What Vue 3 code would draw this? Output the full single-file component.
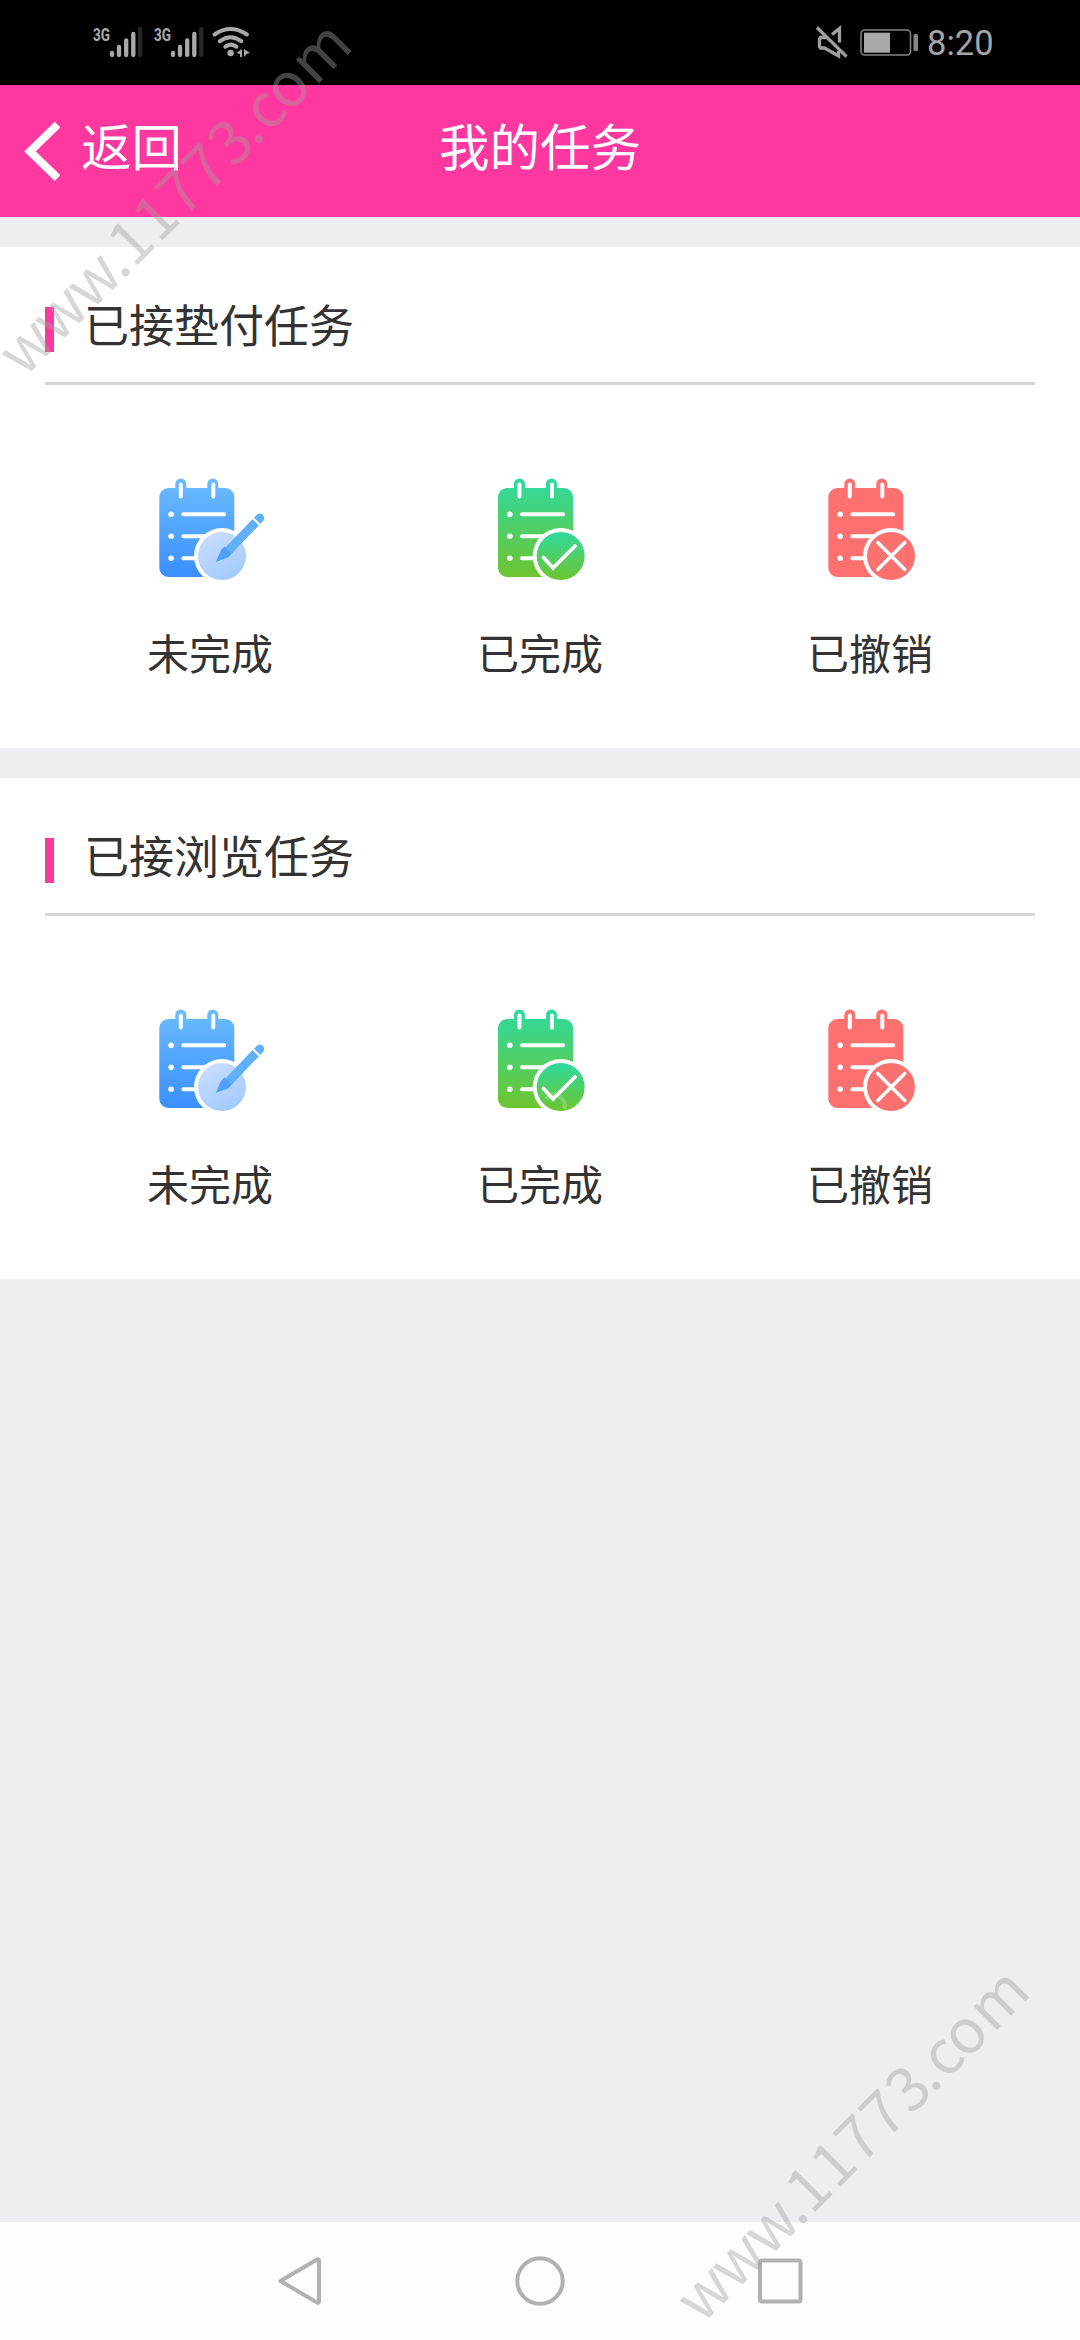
<script setup>
const sections = [
  { title: '已接垫付任务', id: 'advance' },
  { title: '已接浏览任务', id: 'browse' },
]
const tasks = [
  { kind: 'edit', label: '未完成', shift: 2.3 },
  { kind: 'done', label: '已完成', shift: 11 },
  { kind: 'cancel', label: '已撤销', shift: 11.3 },
]
const fills = { edit: 'url(#blue)', done: 'url(#green)', cancel: '#fd7070' }
const discFills = { edit: 'url(#pale)', done: 'url(#greenDisc)', cancel: '#fd7070' }

// Watermark letter advances along its diagonal baseline
const markX = '-0.5 46.7 93.9 138 154.8 190.1 224.8 260.1 295.8 326.5 345 373.3 411.5'
const marks = ['24.3 378.3', '702 2325']
</script>

<template>
  <div class="screen">
    <div class="status">
      <svg class="status-left" width="180" height="40" viewBox="0 0 180 40">
        <g v-for="x in [0, 61]" :key="x" :transform="`translate(${x} 0)`">
          <text class="net" x="3" y="20.5" textLength="17" lengthAdjust="spacingAndGlyphs">3G</text>
          <g stroke="#a9a9a9" stroke-width="4.3" stroke-linecap="round">
            <path d="M22 33v2M29 27v8M36.2 20.500v14.500M43.3 14v21" />
            <path d="M50.2 9v26" stroke="#262626" />
          </g>
        </g>
        <g fill="none" stroke="#a9a9a9" stroke-width="4" stroke-linecap="round">
          <path d="M124.500 14.500q16-11 32.500 0M129.800 21.200q10.700-8 21.500 0M135.300 26.700q5.500-4.200 11 0" />
        </g>
        <circle cx="140.600" cy="33" r="3.200" fill="#a9a9a9" />
        <path d="M146.500 33l5.500-4v8h-2v-3zM154 29l6 4-3.500 1-2.500 3z" fill="#a9a9a9" />
      </svg>
      <div class="status-right">
        <svg width="104" height="40" viewBox="0 0 104 40">
          <g fill="none" stroke="#a0a0a0" stroke-width="3.300">
            <path d="M18 14.500l7.500-6v14M12 17.500H6.500l-1 1.500v7.500l1 1.500h4l14 8V31" />
            <path d="M3 7.500L32.500 36.700" />
          </g>
          <rect x="47" y="10" width="49.500" height="25" rx="3.500" fill="none" stroke="#858585" stroke-width="1.500" />
          <rect x="50" y="12.700" width="26" height="20" fill="#a9a9a9" />
          <rect x="99.500" y="14" width="4.500" height="17" rx="1.500" fill="#858585" />
        </svg>
        <span class="clock">8:20</span>
      </div>
    </div>

    <header class="header">
      <div class="back">
        <svg width="36" height="60" viewBox="0 0 36 60">
          <path d="M33.500 3.500L6 30.500l27.500 26.500" fill="none" stroke="#fff" stroke-width="8" />
        </svg>
        <span>返回</span>
      </div>
      <h1>我的任务</h1>
    </header>

    <main class="content">
      <section v-for="section in sections" :key="section.id" class="panel">
        <h2 class="panel-title"><i></i><span>{{ section.title }}</span></h2>
        <div class="tasks">
          <div v-for="task in tasks" :key="task.kind" class="task">
            <svg class="icon" width="124" height="110" viewBox="0 0 124 110">
              <g :transform="`translate(${task.shift} 0)`">
                <path
                  :fill="fills[task.kind]"
                  d="M18 13h7V9a5.500 5.500 0 0 1 11 0v4h21V9a5.500 5.500 0 0 1 11 0v4h7a9 9 0 0 1 9 9v71a9 9 0 0 1-9 9H18a9 9 0 0 1-9-9V22a9 9 0 0 1 9-9z"
                />
                <g stroke="#fff" stroke-width="4" stroke-linecap="round">
                  <path d="M30.500 9.500v12M63 9.500v12M33 39.300h41M33 61.200h41M33 83.200h41" />
                </g>
                <g fill="#fff">
                  <circle v-for="y in [39.3, 61.2, 83.2]" :key="y" cx="20.800" :cy="y" r="2.800" />
                </g>
                <circle cx="71.700" cy="81" r="28" fill="#fff" />
                <circle cx="71.700" cy="81" r="24" :fill="discFills[task.kind]" />
                <g v-if="task.kind === 'edit'">
                  <path d="M75 79L109.500 43" stroke="#5fb0f9" stroke-width="8.800" stroke-linecap="round" />
                  <path d="M65.500 87l5.200-12 3.500-3.500 7 7-3.200 3.500z" fill="#4f9ff8" />
                  <path d="M101.500 42l9 9" stroke="#fff" stroke-width="2" />
                </g>
                <path
                  v-else-if="task.kind === 'done'"
                  d="M54.500 82.500l9.500 10.500L86 71"
                  fill="none" stroke="#fff" stroke-width="3.800" stroke-linecap="round"
                />
                <path
                  v-else
                  d="M58.500 67.500l27 27M85.500 67.500l-27 27"
                  stroke="#fff" stroke-width="3.600" stroke-linecap="round"
                />
              </g>
            </svg>
            <span>{{ task.label }}</span>
          </div>
        </div>
      </section>
    </main>

    <nav class="nav">
      <svg width="1080" height="118" viewBox="0 0 1080 118">
        <g fill="none" stroke="#b1b1b1" stroke-width="4" stroke-linejoin="round">
          <path d="M280.500 59L317 37.500q2-1 2 1.500v40q0 2.500-2 1.500z" />
          <circle cx="540" cy="59" r="22.700" />
          <rect x="760" y="38.500" width="40.500" height="41" rx="2" />
        </g>
      </svg>
    </nav>

    <svg class="overlay" width="1080" height="2340" viewBox="0 0 1080 2340">
      <defs>
        <linearGradient id="blue" x1="0" y1="0" x2="0" y2="1">
          <stop offset="0" stop-color="#6bbcff" /><stop offset="1" stop-color="#3a8fff" />
        </linearGradient>
        <linearGradient id="pale" x1="0" y1="0" x2="0.500" y2="1">
          <stop offset="0" stop-color="#cde0ff" /><stop offset="1" stop-color="#a4cbff" />
        </linearGradient>
        <linearGradient id="green" x1="0" y1="0" x2="0" y2="1">
          <stop offset="0" stop-color="#2fdaa0" /><stop offset="1" stop-color="#6ec42f" />
        </linearGradient>
        <linearGradient id="greenDisc" x1="0" y1="0" x2="0" y2="1">
          <stop offset="0" stop-color="#2fdaa0" /><stop offset="1" stop-color="#6ec42f" />
        </linearGradient>
      </defs>
      <path d="M546 1099q8-9 16 0q5 5 2 10" fill="none" stroke="#fff" stroke-opacity="0.200" stroke-width="4" />
      <text
        v-for="at in marks" :key="at"
        class="mark" :x="markX" :transform="`translate(${at}) rotate(-45)`"
      >www.11773.com</text>
    </svg>
  </div>
</template>

<style>
body { background: #eeedf2; }
</style>

<style scoped>
.screen {
  position: relative;
  display: flex;
  flex-direction: column;
  width: 1080px;
  height: 2340px;
  overflow: hidden;
  background: #eeedf2;
  color: #333;
  font-family: "Noto Sans CJK SC", sans-serif;
}
.status {
  display: flex;
  justify-content: space-between;
  box-sizing: border-box;
  height: 85px;
  padding: 20px 87px 0 90px;
  background: #000;
}
.status-left { display: block; }
.net {
  font: 700 18px Roboto, sans-serif;
  fill: #a9a9a9;
}
.status-right {
  display: flex;
  gap: 9px;
}
.clock {
  width: 66px;
  margin-top: 1px;
  color: #a5a5a5;
  font: 400 34.500px/44px Roboto, sans-serif;
  text-align: right;
}
.header {
  display: grid;
  grid-template-columns: 1fr auto 1fr;
  align-items: center;
  height: 132px;
  background: #ff389f;
  color: #fff;
}
.header h1, .back span {
  margin: 0;
  padding-bottom: 15px;
  font-size: 50.500px;
  font-weight: 400;
  line-height: 74px;
}
.back {
  display: flex;
  align-items: center;
  gap: 21px;
  padding-left: 24px;
}
.content { flex: 1; }
.panel {
  box-sizing: border-box;
  height: 501px;
  margin-top: 30px;
  padding: 0 45px;
  background: #fff;
}
.panel-title {
  display: flex;
  align-items: center;
  gap: 30px;
  box-sizing: border-box;
  height: 138px;
  margin: 0;
  padding-top: 30px;
  border-bottom: 3px solid #d4d5d5;
  font-size: 45px;
  font-weight: 400;
  line-height: 60px;
}
.panel-title i {
  width: 9px;
  height: 45px;
  background: #f9399f;
}
.panel-title span { padding-bottom: 12px; }
.tasks {
  display: grid;
  grid-template-columns: repeat(3, 1fr);
  padding-top: 90px;
}
.task {
  display: flex;
  flex-direction: column;
  align-items: center;
  gap: 37px;
  font-size: 42px;
  line-height: 60px;
}
.icon { display: block; }
.nav {
  height: 118px;
  background: #fdfdfd;
}
.nav svg { display: block; }
.overlay {
  position: absolute;
  inset: 0;
  pointer-events: none;
}
.mark {
  fill: rgba(160, 160, 160, 0.42);
  font-size: 61px;
}
</style>
